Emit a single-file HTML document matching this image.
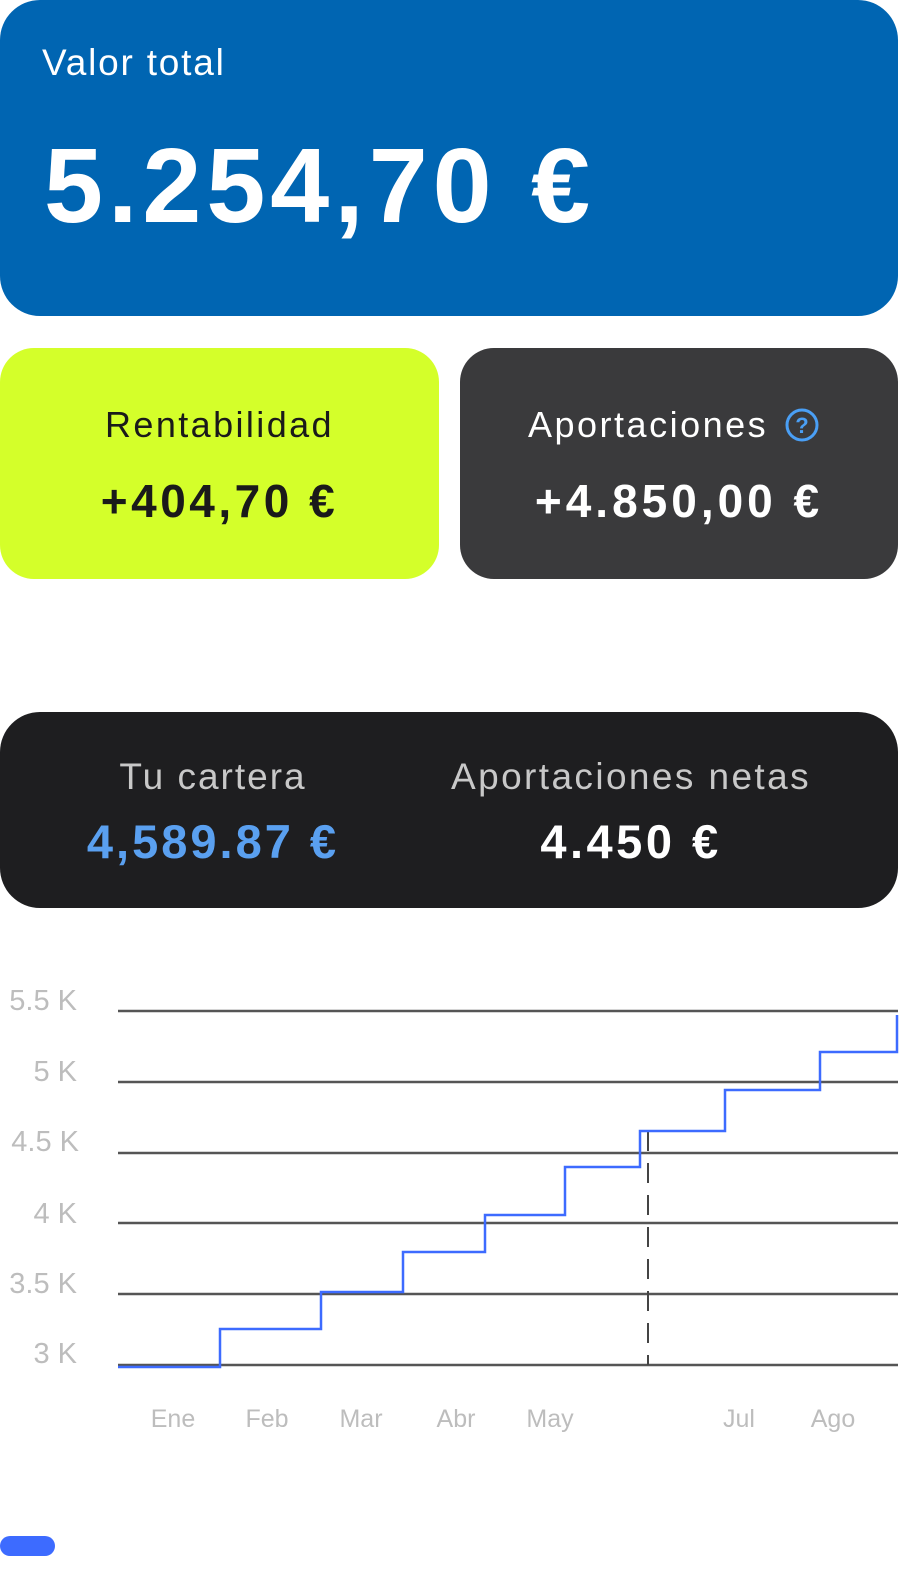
<!DOCTYPE html>
<html style="overflow:hidden"><head><meta charset="utf-8"><style>
html,body{margin:0;padding:0}
body{width:907px;height:1582px;background:#fff;font-family:"Liberation Sans",sans-serif;position:relative;overflow:hidden}
.c{position:absolute;box-sizing:border-box}
</style></head><body>
<div class="c" style="left:0;top:0;width:898px;height:316px;background:#0065b2;border-radius:40px;color:#fff">
<div style="position:absolute;left:42px;top:42px;font-size:37px;letter-spacing:1.8px">Valor total</div>
<div style="position:absolute;left:44px;top:126px;font-size:106px;font-weight:bold;letter-spacing:5px">5.254,70 €</div>
</div>
<div class="c" style="left:0;top:348px;width:439px;height:231px;background:#d4ff2a;border-radius:34px;color:#1a1a1a;text-align:center">
<div style="position:absolute;width:100%;top:56px;font-size:36px;letter-spacing:2.4px">Rentabilidad</div>
<div style="position:absolute;width:100%;top:126px;font-size:46px;font-weight:bold;letter-spacing:3.5px">+404,70 €</div>
</div>
<div class="c" style="left:460px;top:348px;width:438px;height:231px;background:#3a3a3c;border-radius:34px;color:#fff;text-align:center">
<div style="position:absolute;left:68px;top:56px;font-size:36px;letter-spacing:2.5px">Aportaciones</div>
<svg style="position:absolute;left:325px;top:60px" width="34" height="34" viewBox="0 0 34 34"><circle cx="17" cy="17" r="15" fill="none" stroke="#4a9ff5" stroke-width="3"/><text x="17" y="25" font-family="Liberation Sans" font-size="22" font-weight="bold" fill="#4a9ff5" text-anchor="middle">?</text></svg>
<div style="position:absolute;width:100%;top:126px;font-size:46px;font-weight:bold;letter-spacing:4px">+4.850,00 €</div>
</div>
<div class="c" style="left:0;top:712px;width:898px;height:196px;background:#1e1e20;border-radius:40px;text-align:center">
<div style="position:absolute;left:0;width:426px;top:44px;font-size:37px;color:#c8c8c8;letter-spacing:2px">Tu cartera</div>
<div style="position:absolute;left:0;width:426px;top:102px;font-size:47px;font-weight:bold;color:#5aa0f0;letter-spacing:3px">4,589.87 €</div>
<div style="position:absolute;left:426px;width:410px;top:44px;font-size:37px;color:#c8c8c8;letter-spacing:2.4px">Aportaciones netas</div>
<div style="position:absolute;left:426px;width:410px;top:102px;font-size:47px;font-weight:bold;color:#fff;letter-spacing:3.5px">4.450 €</div>
</div>
<svg class="c" style="left:0;top:960px" width="907" height="500" viewBox="0 960 907 500">
<g font-family="Liberation Sans" font-size="29" fill="#bdbdbd" text-anchor="end">
<text x="77" y="1010">5.5 K</text><text x="77" y="1081">5 K</text><text x="79" y="1151">4.5 K</text><text x="77" y="1223">4 K</text><text x="77" y="1293">3.5 K</text><text x="77" y="1363">3 K</text>
</g>
<g stroke="#555" stroke-width="2.5">
<line x1="118" y1="1011" x2="898" y2="1011"/><line x1="118" y1="1082" x2="898" y2="1082"/><line x1="118" y1="1153" x2="898" y2="1153"/><line x1="118" y1="1223" x2="898" y2="1223"/><line x1="118" y1="1294" x2="898" y2="1294"/><line x1="118" y1="1365" x2="898" y2="1365"/>
</g>
<line x1="648" y1="1131" x2="648" y2="1365" stroke="#444" stroke-width="2" stroke-dasharray="20,12"/>
<path d="M118 1367H220V1329H321V1292H403V1252H485V1215H565V1167H640V1131H725V1090H820V1052H897V1015" fill="none" stroke="#3d6bff" stroke-width="2.5"/>
<g font-family="Liberation Sans" font-size="25" fill="#bdbdbd" text-anchor="middle">
<text x="173" y="1427">Ene</text><text x="267" y="1427">Feb</text><text x="361" y="1427">Mar</text><text x="456" y="1427">Abr</text><text x="550" y="1427">May</text><text x="739" y="1427">Jul</text><text x="833" y="1427">Ago</text>
</g>
</svg>
<div class="c" style="left:0;top:1536px;width:55px;height:20px;background:#3d6bff;border-radius:10px"></div>
</body></html>
